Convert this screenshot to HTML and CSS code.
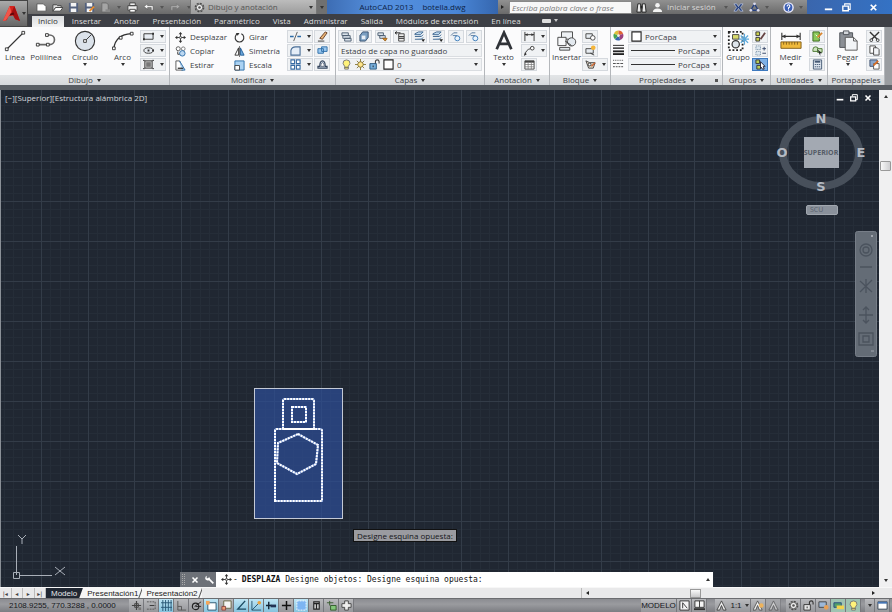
FILE: index.html
```html
<!DOCTYPE html>
<html lang="es">
<head>
<meta charset="utf-8">
<title>AutoCAD 2013 - botella.dwg</title>
<link rel="stylesheet" href="styles.css">
</head>
<body>
<svg class="defs" aria-hidden="true">
  <symbol id="new" viewBox="0 0 12 12"><path d="M1 2h7l3 3v5H1z" fill="#fff" stroke="#555"/></symbol>
  <symbol id="open" viewBox="0 0 12 12"><path d="M1 10V3h4l1 1h4v2H4z" fill="#ddd" stroke="#444"/><path d="M1 10l3-4h8l-3 4z" fill="#fff" stroke="#444"/></symbol>
  <symbol id="save" viewBox="0 0 12 12"><path d="M1 1h10v10H1z" fill="#53617e"/><path d="M3 1h6v4H3zM3 7h6v4H3z" fill="#f4f4f4"/></symbol>
  <symbol id="saveas" viewBox="0 0 12 12"><path d="M1 1h10v10H1z" fill="#53617e"/><path d="M3 1h6v4H3zM3 7h6v4H3z" fill="#f4f4f4"/><path d="M6 10l5-5" stroke="#e98b2a" stroke-width="2"/></symbol>
  <symbol id="cloud" viewBox="0 0 12 12"><path d="M2 1h5l2 2v8H2z" fill="#a5a5a5" stroke="#6a6a6a"/><path d="M6 8h5v3H6z" fill="#888"/></symbol>
  <symbol id="print" viewBox="0 0 12 12"><path d="M3 1h6v3H3zM1 4h10v5H1z" fill="#eee" stroke="#444"/><path d="M3 8h6v3H3z" fill="#fff" stroke="#444"/></symbol>
  <symbol id="undo" viewBox="0 0 12 12"><path d="M5 2L1 5l4 3V6h4v3h2V4H5z" fill="#f5f5f5" stroke="#555" stroke-width=".6"/></symbol>
  <symbol id="redo" viewBox="0 0 12 12"><path d="M7 2l4 3-4 3V6H3v3H1V4h6z" fill="#a9a9a9" stroke="#707070" stroke-width=".6"/></symbol>
  <symbol id="gear" viewBox="0 0 12 12"><circle cx="6" cy="6" r="4.5" fill="none" stroke="#4b4b4b" stroke-width="1.6" stroke-dasharray="2.2 1.3"/><circle cx="6" cy="6" r="3.5" fill="#eee" stroke="#555"/><circle cx="6" cy="6" r="1.4" fill="#555"/></symbol>
  <symbol id="binoc" viewBox="0 0 12 12"><path d="M2 2h3l.5 9H1zM7 2h3l1 9H6.500z" fill="#e8e8e8" stroke="#222"/><path d="M5 4h2v3H5z" fill="#222"/></symbol>
  <symbol id="user" viewBox="0 0 12 12"><circle cx="6" cy="3.500" r="2.500" fill="#f3f3f3"/><path d="M1 11q0-4 5-4t5 4z" fill="#f3f3f3"/></symbol>
  <symbol id="exch" viewBox="0 0 12 12"><path d="M1 2h3l2 3 2-3h3L8 6l3 4H8L6 7l-2 3H1l3-4z" fill="#25407d" stroke="#c8d2ea" stroke-width=".7"/></symbol>
  <symbol id="tri" viewBox="0 0 12 12"><path d="M6 2l4 7H2z" fill="none" stroke="#26407e" stroke-width="1.500"/><circle cx="6" cy="2" r="1.500" fill="#dde"/><circle cx="2" cy="9" r="1.500" fill="#dde"/><circle cx="10" cy="9" r="1.500" fill="#dde"/></symbol>
  <symbol id="help" viewBox="0 0 12 12"><circle cx="6" cy="6" r="5" fill="#3a5eb5" stroke="#eef" stroke-width="1.500"/><path d="M4.500 5q0-2 1.500-2t1.500 1.500q0 1-1.500 1.800V7.500M6 8.300V9.500" fill="none" stroke="#fff" stroke-width="1.200"/></symbol>
  <symbol id="min" viewBox="0 0 12 12"><path d="M2 8h8" stroke="#fff" stroke-width="2"/></symbol>
  <symbol id="rest" viewBox="0 0 12 12"><path d="M4 4V2h6v6H8" fill="none" stroke="currentColor" stroke-width="1.200"/><path d="M2 4.500h6v5H2z" fill="none" stroke="currentColor" stroke-width="1.500"/></symbol>
  <symbol id="x" viewBox="0 0 12 12"><path d="M3 3l6 6M9 3L3 9" stroke="#fff" stroke-width="1.900"/></symbol>

  <symbol id="line" viewBox="0 0 24 24"><path d="M3 21L21 3" stroke="#333" stroke-width="1.200"/><path d="M1.500 19.500h3v3h-3zM19.500 1.500h3v3h-3z" fill="#fff" stroke="#333"/></symbol>
  <symbol id="pline" viewBox="0 0 24 24"><path d="M3 16h13a5 5 0 0 0 0-10.500H13" fill="none" stroke="#666" stroke-width="1.800"/><path d="M1.500 14.500h3v3h-3zM11.500 4h3v3h-3zM12.500 14.500h3v3h-3z" fill="#fff" stroke="#333"/></symbol>
  <symbol id="circ" viewBox="0 0 24 24"><circle cx="12" cy="12" r="10.500" fill="#dbe2ea" stroke="#333" stroke-width="1.200"/><path d="M12 12l7-7" stroke="#333"/><path d="M10.500 10.500h3v3h-3z" fill="#fff" stroke="#333"/></symbol>
  <symbol id="arc" viewBox="0 0 24 24"><path d="M2 20Q4 5 21 4" fill="none" stroke="#333" stroke-width="1.400"/><path d="M.5 18.500h3v3h-3zM8 7h3v3H8zM20 2.500h3v3h-3z" fill="#fff" stroke="#333"/></symbol>
  <symbol id="rect" viewBox="0 0 12 12"><path d="M1 3h10v6H1z" fill="#e8edf3" stroke="#333"/><path d="M0 8h2v2H0zM10 2h2v2h-2z" fill="#333"/></symbol>
  <symbol id="elip" viewBox="0 0 12 12"><ellipse cx="6" cy="6" rx="5" ry="3" fill="#e8edf3" stroke="#333"/><path d="M5 5h2v2H5zM10 5h2v2h-2z" fill="#333"/></symbol>
  <symbol id="hatch" viewBox="0 0 12 12"><path d="M2 2h8v8H2z" fill="#ccc" stroke="#333"/><path d="M3.500 3.500h5v5h-5z" fill="#777"/><path d="M0 1.500h2M10 1.500h2M0 10.500h2M10 10.500h2" stroke="#333"/></symbol>
  <symbol id="move" viewBox="0 0 12 12"><path d="M6 1v10M1 6h10" stroke="#333"/><path d="M6 0l2 2.500H4zM6 12l2-2.500H4zM0 6l2.500-2v4zM12 6L9.500 4v4z" fill="#333"/><path d="M5 5h2v2H5z" fill="#fff" stroke="#333" stroke-width=".6"/></symbol>
  <symbol id="copy" viewBox="0 0 12 12"><circle cx="3.500" cy="3" r="2.200" fill="#fff" stroke="#555"/><circle cx="9" cy="3" r="2" fill="#fff" stroke="#777"/><circle cx="8" cy="8" r="3" fill="#bcd8f2" stroke="#2d6da8"/><path d="M3 6v3h2" fill="none" stroke="#333"/></symbol>
  <symbol id="stretch" viewBox="0 0 12 12"><path d="M1 1h4l4 10H1z" fill="#fff" stroke="#555"/><path d="M5 1l6 10H7" fill="#b4d6f4" stroke="#2d6da8"/><path d="M3 9h6" stroke="#222" stroke-width="1.300"/></symbol>
  <symbol id="rot" viewBox="0 0 12 12"><path d="M4 2a4.700 4.700 0 1 0 4 0" fill="none" stroke="#333" stroke-width="1.200"/><path d="M2 1l4 0-2 3z" fill="#333"/></symbol>
  <symbol id="mirror" viewBox="0 0 12 12"><path d="M5 2v8H1z" fill="#fff" stroke="#333"/><path d="M7 2v8h4z" fill="#6ba8de" stroke="#245d95"/><path d="M6 0v12" stroke="#333" stroke-width=".7"/></symbol>
  <symbol id="scale" viewBox="0 0 12 12"><path d="M1 1h10v10H1z" fill="#aad2f3" stroke="#2d6da8"/><path d="M1 6h5v5H1z" fill="#fff" stroke="#444"/></symbol>
  <symbol id="trim" viewBox="0 0 12 12"><path d="M0 6h4M8 6h4" stroke="#2d6da8" stroke-width="1.400"/><path d="M8 1L4 11" stroke="#555"/></symbol>
  <symbol id="fillet" viewBox="0 0 12 12"><path d="M1 11V6q1-4 5-4h5v9z" fill="#e4edf7" stroke="#4a6e97" stroke-width="1.200"/></symbol>
  <symbol id="array" viewBox="0 0 12 12"><path d="M1 1h4v4H1zM7 1h4v4H7zM1 7h4v4H1zM7 7h4v4H7z" fill="#fff" stroke="#376ba3" stroke-width="1.200"/></symbol>
  <symbol id="erase" viewBox="0 0 12 12"><path d="M3 8l6-7 2 1-5 7z" fill="#eab374" stroke="#663d23"/><path d="M1 11h7" stroke="#333"/></symbol>
  <symbol id="expl" viewBox="0 0 12 12"><path d="M1 4h6v5H1zM5 2h6v5H5z" fill="#9bc8ef" stroke="#2d6da8"/></symbol>
  <symbol id="offset" viewBox="0 0 12 12"><path d="M1 10h10V8H9q0-6-3-6T3 8H1z" fill="#dbe6f2" stroke="#35455c" stroke-width="1.200"/><path d="M4 8q0-4 2-4t2 4z" fill="#fff" stroke="#35455c" stroke-width=".8"/></symbol>
  <symbol id="lay" viewBox="0 0 12 12"><path d="M1 2h7v3H1zM2 5h8v3H2zM4 8h7v3H4z" fill="#dce4ec" stroke="#4c5d70"/></symbol>
  <symbol id="layb" viewBox="0 0 12 12"><path d="M1 5l3-4h6v6l-3 4H1z" fill="#7b9fc1" stroke="#344f6d"/><path d="M3 5h4v4H3z" fill="#e8eef5"/></symbol>
  <symbol id="layo" viewBox="0 0 12 12"><path d="M1 2h6v3H1zM3 5h6v3H3z" fill="#dce4ec" stroke="#4c5d70"/><path d="M6 8h5l-2 3z" fill="#e09326" stroke="#99601d"/></symbol>
  <symbol id="layp" viewBox="0 0 12 12"><path d="M4 3h6v3H4zM4 6h6v2H4zM4 8h6v3H4z" fill="#eee" stroke="#444"/><path d="M0 2h6M0 2l2-1.500M0 2l2 1.500" stroke="#222"/></symbol>
  <symbol id="layd" viewBox="0 0 12 12"><path d="M1 3l4-2h5L7 4H1zM1 6h7l2-2M1 9h7l2-2" fill="#c1dbf0" stroke="#3d668e"/><path d="M8 9h4l-2 3z" fill="#222"/></symbol>
  <symbol id="layf" viewBox="0 0 12 12"><path d="M1 5l3-3h4M3 5h5" fill="none" stroke="#53779c"/><circle cx="8" cy="8" r="2.700" fill="#e9f3fc" stroke="#397ab8"/></symbol>
  <symbol id="bulb" viewBox="0 0 12 12"><path d="M4 8Q1 5 3 2q3-2 6 0 2 3-1 6v3H4z" fill="#fff37a" stroke="#777"/><path d="M4 9h4" stroke="#555"/></symbol>
  <symbol id="sun" viewBox="0 0 12 12"><path d="M6 0v12M0 6h12M2 2l8 8M10 2l-8 8" stroke="#8a7a3a"/><circle cx="6" cy="6" r="3" fill="#ffe58a" stroke="#7e6f35"/></symbol>
  <symbol id="lock" viewBox="0 0 12 12"><path d="M7 6V3q0-2 2-2t2 2v2" fill="none" stroke="#444" stroke-width="1.200"/><path d="M1 5h7v6H1z" fill="#78b0dc" stroke="#29587f"/><path d="M4 7h1v2H4z" fill="#222"/></symbol>
  <symbol id="lockg" viewBox="0 0 12 12"><path d="M7 6V3q0-2 2-2t2 2v2" fill="none" stroke="#333" stroke-width="1.200"/><path d="M1 5h7v6H1z" fill="#e6e6e6" stroke="#333"/><path d="M4 7h1v2H4z" fill="#222"/></symbol>
  <symbol id="sw" viewBox="0 0 12 12"><path d="M1 1h10v10H1z" fill="#fff" stroke="#222" stroke-width="1.200"/></symbol>
  <symbol id="bigA" viewBox="0 0 24 24"><path d="M4 21L12 3l8 18M7 15h10" fill="none" stroke="#303338" stroke-width="3"/></symbol>
  <symbol id="dim" viewBox="0 0 12 12"><path d="M1 1v10M11 1v10M1 4h10" stroke="#333" fill="none"/><path d="M1 4l3-1.500v3zM11 4L8 2.500v3z" fill="#333"/></symbol>
  <symbol id="lead" viewBox="0 0 12 12"><path d="M1 11Q2 5 7 4" fill="none" stroke="#333"/><circle cx="9" cy="3.500" r="2" fill="#fff" stroke="#333"/><path d="M0 12l1-4 2 2z" fill="#333"/></symbol>
  <symbol id="table" viewBox="0 0 12 12"><path d="M1 2h10v9H1z" fill="#fff" stroke="#444"/><path d="M1 3h10" stroke="#444" stroke-width="2"/><path d="M1 6h10M1 8.500h10M4.500 3v8M8 3v8" stroke="#777" stroke-width=".8"/></symbol>
  <symbol id="ins" viewBox="0 0 24 24"><path d="M6 2h12v8H6z" fill="#eef1f4" stroke="#444"/><circle cx="17" cy="13" r="4.500" fill="#e3e9ef" stroke="#444"/><path d="M2 8h9v9H2z" fill="#f7f8fa" stroke="#444"/><path d="M4 19h11v3H4z" fill="#e1e6ea" stroke="#444"/><path d="M10 12l7 5" stroke="#333"/></symbol>
  <symbol id="blk" viewBox="0 0 12 12"><path d="M1 3h7v5H1z" fill="#e7ecf1" stroke="#444"/><circle cx="8.500" cy="7.500" r="2.500" fill="#fff" stroke="#444"/></symbol>
  <symbol id="blks" viewBox="0 0 12 12"><path d="M1 4h8v5H1z" fill="#e7ecf1" stroke="#444"/><circle cx="9" cy="3" r="2.500" fill="#f4b53a"/><path d="M6 9l4 2" stroke="#333"/></symbol>
  <symbol id="tag" viewBox="0 0 12 12"><path d="M1 2l4 2h6L9 10H4z" fill="#e1d5c2" stroke="#444"/><circle cx="5" cy="6" r="1.500" fill="#fff" stroke="#333"/><path d="M7 8l4-4" stroke="#c63" stroke-width="1.500"/></symbol>
  <symbol id="wheel" viewBox="0 0 12 12"><path d="M6 6L1 4A5.500 5.500 0 0 1 6 .5z" fill="#ddc13c"/><path d="M6 6V.5A5.500 5.500 0 0 1 11 4z" fill="#e06435"/><path d="M6 6l5-2a5.500 5.500 0 0 1-3 7z" fill="#9b417e"/><path d="M6 6l2 5a5.500 5.500 0 0 1-6-1z" fill="#3764ae"/><path d="M6 6l-4 4a5.500 5.500 0 0 1-1-6z" fill="#46a452"/><circle cx="6" cy="6" r="1.500" fill="#eee"/></symbol>
  <symbol id="lw" viewBox="0 0 12 12"><path d="M0 1.500h12" stroke="#222"/><path d="M0 4.500h12" stroke="#222" stroke-width="1.500"/><path d="M0 8h12" stroke="#222" stroke-width="2"/><path d="M0 11h12" stroke="#222" stroke-width="2"/></symbol>
  <symbol id="lt" viewBox="0 0 12 12"><path d="M0 2.500h12" stroke="#444" stroke-dasharray="1 1"/><path d="M0 6h12" stroke="#444" stroke-dasharray="3 1"/><path d="M0 9.500h12" stroke="#444" stroke-dasharray="2 1"/></symbol>
  <symbol id="grp" viewBox="0 0 24 24"><path d="M2 2h15v20H2z" fill="#fff" stroke="#222" stroke-width="2" stroke-dasharray="2 2"/><path d="M6 5h7v5H6z" fill="#d9db6d" stroke="#444"/><circle cx="9.500" cy="15.500" r="4" fill="#dfe6ec" stroke="#333" stroke-width="1.300"/><path d="M19 4v12M13 10h11M15 6l8 8M23 6l-8 8" stroke="#5da9da" stroke-width="1.400"/></symbol>
  <symbol id="ug" viewBox="0 0 12 12"><path d="M1 1h4v4H1zM1 7h4v4H1z" fill="#ccd14f" stroke="#333"/><path d="M6 9l5-7" stroke="#644" stroke-width="2"/></symbol>
  <symbol id="ge" viewBox="0 0 12 12"><path d="M1 1h5v4H1zM1 7h5v4H1z" fill="#dde7ef" stroke="#68829a" stroke-dasharray="1 1"/><path d="M8 4h4M10 2v4M8 9h4" stroke="#346"/></symbol>
  <symbol id="gs" viewBox="0 0 12 12"><path d="M1 1h4v4H1zM2 7h4v4H2z" fill="#b8cf58" stroke="#333"/><path d="M6 3l5 5-2 0 1 3-2 0-1-2-1 1z" fill="#fff" stroke="#223"/></symbol>
  <symbol id="meas" viewBox="0 0 24 24"><path d="M2 3v8M22 3v8M2 7h20" stroke="#333" stroke-width="1.200"/><path d="M2 7l4-2v4zM22 7l-4-2v4z" fill="#333"/><path d="M1 13h22v7H1z" fill="#efb93b" stroke="#805d18"/><path d="M4 13v3M7 13v3M10 13v3M13 13v3M16 13v3M19 13v3" stroke="#805d18"/></symbol>
  <symbol id="qs" viewBox="0 0 12 12"><path d="M1 1h7v10H1z" fill="#8cc95b" stroke="#37651f"/><path d="M4 4l4 4" stroke="#fff"/><path d="M6 7l5-5" stroke="#d9852d" stroke-width="2"/></symbol>
  <symbol id="qc" viewBox="0 0 12 12"><path d="M1 5q0-3 3-3t3 3v2H1z" fill="#cfe4c0" stroke="#48752e"/><path d="M6 4h5v4H6z" fill="#cfe4c0" stroke="#48752e"/><path d="M6 5l5 4-2 0 0 3z" fill="#222"/></symbol>
  <symbol id="calc" viewBox="0 0 12 12"><path d="M1.500 1h9v10h-9z" fill="#dce4ee" stroke="#445873"/><path d="M3 3h6" stroke="#445873" stroke-width="2"/><path d="M3 6h6M3 8.500h6" stroke="#445873" stroke-dasharray="1.500 .7"/></symbol>
  <symbol id="paste" viewBox="0 0 24 24"><path d="M3 3h14v16H3z" fill="#8b8f95" stroke="#4b4f55"/><path d="M7 1h6v4H7z" fill="#d3d6da" stroke="#4b4f55"/><path d="M9 8h9l4 4v10H9z" fill="#f2f4f6" stroke="#555"/><path d="M18 8v4h4" fill="none" stroke="#555"/></symbol>
  <symbol id="cut" viewBox="0 0 12 12"><path d="M1 1l8 8M11 1L3 9" stroke="#333" stroke-width="1.500"/><circle cx="2.500" cy="10" r="1.500" fill="none" stroke="#333"/><circle cx="9.500" cy="10" r="1.500" fill="none" stroke="#333"/></symbol>
  <symbol id="dup" viewBox="0 0 12 12"><path d="M1 1h6v8H1z" fill="#fff" stroke="#444"/><path d="M5 3h4l2 2v6H5z" fill="#f2f4f7" stroke="#444"/></symbol>
  <symbol id="mp" viewBox="0 0 12 12"><path d="M1 1h8v7H1z" fill="#8ba7cb" stroke="#3b4f6d"/><path d="M5 5h6v6H5z" fill="#fff" stroke="#555"/><path d="M5 7l5-5" stroke="#d96f26" stroke-width="2"/></symbol>

  <symbol id="s1" viewBox="0 0 12 12"><path d="M6 1v10M1 6h10" fill="none" stroke="#444" stroke-width="1.300"/><path d="M4 4h4v4H4z" fill="none" stroke="#444"/><path d="M8 8h3v3H8z" fill="#777"/></symbol>
  <symbol id="s2" viewBox="0 0 12 12"><path d="M1 2h9v8H1" fill="none" stroke="#555" stroke-dasharray="2 1"/><path d="M4 6h5" stroke="#333"/></symbol>
  <symbol id="s3" viewBox="0 0 12 12"><path d="M2 0v12M5 0v12M8 0v12M11 0v12M0 3h12M0 8h12" stroke="#265573"/></symbol>
  <symbol id="s4" viewBox="0 0 12 12"><path d="M2 1v10h9M2 7h4v4" fill="none" stroke="#555"/></symbol>
  <symbol id="s5" viewBox="0 0 12 12"><circle cx="5" cy="7" r="3.500" fill="none" stroke="#222" stroke-width="1.300"/><path d="M4 7l7-5M5 7h6" stroke="#222"/></symbol>
  <symbol id="s6" viewBox="0 0 12 12"><path d="M2 3h9v8H2z" fill="#fff" stroke="#28536d"/><path d="M0 1h4v4H0z" fill="#f4a659"/></symbol>
  <symbol id="s7" viewBox="0 0 12 12"><path d="M3 1h8v8H3z" fill="#f5f5f5" stroke="#664"/><path d="M1 7h4v4H1z" fill="#ee9b72" stroke="#844"/></symbol>
  <symbol id="s8" viewBox="0 0 12 12"><path d="M10 1L2 10h9" fill="none" stroke="#1c4b63" stroke-width="1.500"/></symbol>
  <symbol id="s9" viewBox="0 0 12 12"><path d="M1 1v10h10M1 11l7-7" fill="none" stroke="#24516a"/><circle cx="9" cy="3" r="2" fill="#e9a13c"/></symbol>
  <symbol id="s10" viewBox="0 0 12 12"><path d="M3 2v8M0 6h6" stroke="#123" stroke-width="1.500"/><path d="M5 5h6v3H5z" fill="#235"/></symbol>
  <symbol id="s11" viewBox="0 0 12 12"><path d="M6 1v10M1 6h10" stroke="#111" stroke-width="1.600"/></symbol>
  <symbol id="s12" viewBox="0 0 12 12"><path d="M1 1h10v10H1z" fill="#7db5f2" stroke="#f4faff" stroke-dasharray="2 1"/></symbol>
  <symbol id="s13" viewBox="0 0 12 12"><path d="M3 2h6v8H3zM3 4h6M6 4v6" fill="#ccc" stroke="#222" stroke-width="1.200"/></symbol>
  <symbol id="s14" viewBox="0 0 12 12"><path d="M1 3h7M4 1v5" stroke="#355a2c"/><path d="M5 6h6v5H5z" fill="#83c779" stroke="#315a2b"/></symbol>
  <symbol id="s15" viewBox="0 0 12 12"><path d="M4 1h4v3h3v4H8v3H4V8H1V4h3z" fill="#eee" stroke="#444"/></symbol>
  <symbol id="m1" viewBox="0 0 12 12"><path d="M1 1h10v10H1z" fill="#f4f4f4" stroke="#333"/><path d="M4 3v6M4 3l5 6" stroke="#333"/></symbol>
  <symbol id="m2" viewBox="0 0 12 12"><path d="M1 1h10v7H1zM6 1v7" fill="#f4f4f4" stroke="#333"/><path d="M0 10h12" stroke="#333" stroke-width="2"/></symbol>
  <symbol id="ann" viewBox="0 0 12 12"><path d="M6 1l5 10H8L6 6l-2 5H1z" fill="#eee" stroke="#444"/></symbol>
  <symbol id="anns" viewBox="0 0 12 12"><path d="M5 1l5 10H7L5 6l-2 5H0z" fill="#eee" stroke="#555"/><circle cx="9" cy="6" r="2.500" fill="#efb35a"/></symbol>
  <symbol id="hw" viewBox="0 0 12 12"><path d="M1 2h8v6H1z" fill="#9cb8d9" stroke="#444"/><circle cx="9" cy="8" r="2.500" fill="#e8a057"/></symbol>
  <symbol id="iso" viewBox="0 0 12 12"><path d="M1 3h8v5H1z" fill="#4f9e6d" stroke="#274a80"/><path d="M4 6h8v4H4z" fill="#f2d34e"/></symbol>
  <symbol id="clean" viewBox="0 0 12 12"><path d="M1 2h10v8H1z" fill="#fff" stroke="#345"/><path d="M1 3h10" stroke="#4676b5" stroke-width="2"/></symbol>
  <symbol id="wrench" viewBox="0 0 12 12"><path d="M4 4l6 6" stroke="#fff" stroke-width="2"/><path d="M2 1a3 3 0 1 0 4 4L5 2 4 4 2 4z" fill="#fff"/></symbol>
</svg>

<header class="top">
  <button class="app" aria-label="Menú de la aplicación">
    <svg viewBox="0 0 20 20"><path d="M1 18L8 2h5l6 16-5-2-2-4-5 1-2 4z" fill="#d5241d"/><path d="M8 2l2 7-6 8-3 1z" fill="#f0564a"/><path d="M13 2l6 16-5-2-4-7z" fill="#a40f10"/><path d="M9 10l3-1 1 2-5 1z" fill="#5e080a"/></svg><i class="dn"></i>
  </button>
  <div class="titlebar">
    <div class="quick">
      <button aria-label="Nuevo"><svg class="ic"><use href="#new"/></svg></button><button aria-label="Abrir"><svg class="ic"><use href="#open"/></svg></button><button aria-label="Guardar"><svg class="ic"><use href="#save"/></svg></button><button aria-label="Guardar como"><svg class="ic"><use href="#saveas"/></svg></button><button aria-label="Nube"><svg class="ic"><use href="#cloud"/></svg></button><i class="dn dim"></i><button aria-label="Imprimir"><svg class="ic"><use href="#print"/></svg></button><button aria-label="Deshacer"><svg class="ic"><use href="#undo"/></svg></button><i class="dn dim"></i><button aria-label="Rehacer"><svg class="ic"><use href="#redo"/></svg></button><i class="dn dim"></i>
    </div>
    <div class="workspace"><svg class="ic"><use href="#gear"/></svg><select aria-label="Espacio de trabajo"><option>Dibujo y anotación</option></select><i class="dn"></i></div>
    <button class="more" aria-label="Personalizar"><i class="dn"></i></button>
    <div class="doc"><span>AutoCAD 2013</span><span>botella.dwg</span></div>
    <div class="searchzone"><i class="rt"></i><input type="text" aria-label="Buscar" placeholder="Escriba palabra clave o frase"></div>
    <div class="account">
      <button aria-label="Buscar ahora"><svg class="ic"><use href="#binoc"/></svg></button><button class="login"><svg class="ic"><use href="#user"/></svg>Iniciar sesión</button><i class="dn dim"></i><button aria-label="Exchange"><svg class="ic"><use href="#exch"/></svg></button><button aria-label="Conectado"><svg class="ic"><use href="#tri"/></svg></button><i class="dn dim"></i><button class="helpb" aria-label="Ayuda"><svg class="ic"><use href="#help"/></svg></button><i class="dn dim"></i>
    </div>
    <div class="winctl"><button aria-label="Minimizar"><svg class="ic"><use href="#min"/></svg></button><button aria-label="Restaurar"><svg class="ic"><use href="#rest"/></svg></button><button aria-label="Cerrar"><svg class="ic"><use href="#x"/></svg></button></div>
  </div>
  <nav class="tabs">
    <a href="#" class="on">Inicio</a><a href="#">Insertar</a><a href="#">Anotar</a><a href="#">Presentación</a><a href="#">Paramétrico</a><a href="#">Vista</a><a href="#">Administrar</a><a href="#">Salida</a><a href="#">Módulos de extensión</a><a href="#">En línea</a><button aria-label="Minimizar cinta"><b class="pill"></b><i class="dn"></i></button>
  </nav>
</header>

<main class="ribbon">
  <section class="panel">
    <div class="body draw">
      <button class="big"><svg><use href="#line"/></svg>Línea</button>
      <button class="big"><svg><use href="#pline"/></svg>Polilínea</button>
      <button class="big"><svg><use href="#circ"/></svg>Círculo<i class="dn"></i></button>
      <button class="big"><svg><use href="#arc"/></svg>Arco<i class="dn"></i></button>
      <div class="stack">
        <button class="split" aria-label="Rectángulo"><svg class="ic"><use href="#rect"/></svg><i class="dn"></i></button>
        <button class="split" aria-label="Elipse"><svg class="ic"><use href="#elip"/></svg><i class="dn"></i></button>
        <button class="split" aria-label="Sombreado"><svg class="ic"><use href="#hatch"/></svg><i class="dn"></i></button>
      </div>
    </div>
    <h2>Dibujo <i class="dn"></i></h2>
  </section>
  <section class="panel">
    <div class="body modify">
      <div class="stack">
        <button class="lab"><svg class="ic"><use href="#move"/></svg>Desplazar</button>
        <button class="lab"><svg class="ic"><use href="#copy"/></svg>Copiar</button>
        <button class="lab"><svg class="ic"><use href="#stretch"/></svg>Estirar</button>
      </div>
      <div class="stack">
        <button class="lab"><svg class="ic"><use href="#rot"/></svg>Girar</button>
        <button class="lab"><svg class="ic"><use href="#mirror"/></svg>Simetría</button>
        <button class="lab"><svg class="ic"><use href="#scale"/></svg>Escala</button>
      </div>
      <div class="stack">
        <button class="split" aria-label="Recortar"><svg class="ic"><use href="#trim"/></svg><i class="dn"></i></button>
        <button class="split" aria-label="Empalme"><svg class="ic"><use href="#fillet"/></svg><i class="dn"></i></button>
        <button class="split" aria-label="Matriz"><svg class="ic"><use href="#array"/></svg><i class="dn"></i></button>
      </div>
      <div class="stack">
        <button class="sm" aria-label="Borrar"><svg class="ic"><use href="#erase"/></svg></button>
        <button class="sm" aria-label="Descomponer"><svg class="ic"><use href="#expl"/></svg></button>
        <button class="sm" aria-label="Desfase"><svg class="ic"><use href="#offset"/></svg></button>
      </div>
    </div>
    <h2>Modificar <i class="dn"></i></h2>
  </section>
  <section class="panel">
    <div class="body layers">
      <div class="row">
        <button class="sm" aria-label="Propiedades de capas"><svg class="ic"><use href="#lay"/></svg></button><button class="sm" aria-label="Definir actual"><svg class="ic"><use href="#layb"/></svg></button><button class="sm" aria-label="Igualar"><svg class="ic"><use href="#layo"/></svg></button><button class="sm" aria-label="Anterior"><svg class="ic"><use href="#layp"/></svg></button><button class="sm" aria-label="Aislar"><svg class="ic"><use href="#layd"/></svg></button><button class="sm" aria-label="Desaislar"><svg class="ic"><use href="#layd"/></svg></button><button class="sm" aria-label="Inutilizar"><svg class="ic"><use href="#layf"/></svg></button><button class="sm" aria-label="Desactivar"><svg class="ic"><use href="#layf"/></svg></button>
      </div>
      <div class="pick"><select aria-label="Estado de capa"><option>Estado de capa no guardado</option></select><i class="dn"></i></div>
      <div class="pick"><svg class="ic"><use href="#bulb"/></svg><svg class="ic"><use href="#sun"/></svg><svg class="ic"><use href="#lock"/></svg><svg class="ic"><use href="#sw"/></svg><select aria-label="Capa"><option>0</option></select><i class="dn"></i></div>
    </div>
    <h2>Capas <i class="dn"></i></h2>
  </section>
  <section class="panel">
    <div class="body two">
      <button class="big"><svg><use href="#bigA"/></svg>Texto<i class="dn"></i></button>
      <div class="stack">
        <button class="split" aria-label="Cota"><svg class="ic"><use href="#dim"/></svg><i class="dn"></i></button>
        <button class="split" aria-label="Directriz"><svg class="ic"><use href="#lead"/></svg><i class="dn"></i></button>
        <button class="sm" aria-label="Tabla"><svg class="ic"><use href="#table"/></svg></button>
      </div>
    </div>
    <h2>Anotación <i class="dn"></i></h2>
  </section>
  <section class="panel">
    <div class="body two">
      <button class="big"><svg><use href="#ins"/></svg>Insertar</button>
      <div class="stack">
        <button class="sm" aria-label="Crear bloque"><svg class="ic"><use href="#blk"/></svg></button>
        <button class="sm" aria-label="Editar bloque"><svg class="ic"><use href="#blks"/></svg></button>
        <button class="split" aria-label="Atributos"><svg class="ic"><use href="#tag"/></svg><i class="dn"></i></button>
      </div>
    </div>
    <h2>Bloque <i class="dn"></i></h2>
  </section>
  <section class="panel">
    <div class="body props">
      <svg class="ic"><use href="#wheel"/></svg><div class="pick"><svg class="ic"><use href="#sw"/></svg><select aria-label="Color"><option>PorCapa</option></select><i class="dn"></i></div>
      <svg class="ic"><use href="#lw"/></svg><div class="pick"><b class="rule"></b><select class="tail" aria-label="Grosor de línea"><option>PorCapa</option></select><i class="dn"></i></div>
      <svg class="ic"><use href="#lt"/></svg><div class="pick"><b class="rule"></b><select class="tail" aria-label="Tipo de línea"><option>PorCapa</option></select><i class="dn"></i></div>
    </div>
    <h2>Propiedades <i class="dn"></i></h2><span class="launch"></span>
  </section>
  <section class="panel">
    <div class="body two">
      <button class="big"><svg><use href="#grp"/></svg>Grupo</button>
      <div class="stack">
        <button class="sm" aria-label="Desagrupar"><svg class="ic"><use href="#ug"/></svg></button>
        <button class="sm" aria-label="Editar grupo"><svg class="ic"><use href="#ge"/></svg></button>
        <button class="sm sel" aria-label="Selección de grupo"><svg class="ic"><use href="#gs"/></svg></button>
      </div>
    </div>
    <h2>Grupos <i class="dn"></i></h2>
  </section>
  <section class="panel">
    <div class="body two">
      <button class="big"><svg><use href="#meas"/></svg>Medir<i class="dn"></i></button>
      <div class="stack">
        <button class="sm" aria-label="Selección rápida"><svg class="ic"><use href="#qs"/></svg></button>
        <button class="sm" aria-label="Seleccionar todo"><svg class="ic"><use href="#qc"/></svg></button>
        <button class="sm" aria-label="Calculadora"><svg class="ic"><use href="#calc"/></svg></button>
      </div>
    </div>
    <h2>Utilidades <i class="dn"></i></h2>
  </section>
  <section class="panel">
    <div class="body two">
      <button class="big"><svg><use href="#paste"/></svg>Pegar<i class="dn"></i></button>
      <div class="stack">
        <button class="sm" aria-label="Cortar"><svg class="ic"><use href="#cut"/></svg></button>
        <button class="sm" aria-label="Copiar al portapapeles"><svg class="ic"><use href="#dup"/></svg></button>
        <button class="sm" aria-label="Igualar propiedades"><svg class="ic"><use href="#mp"/></svg></button>
      </div>
    </div>
    <h2>Portapapeles</h2>
  </section>
</main>

<div class="work">
  <div class="canvas">
    <svg class="grid" aria-hidden="true">
      <defs>
        <pattern id="minor" width="28" height="8" x="12" y="7" patternUnits="userSpaceOnUse"><path d="M0 .5h28M.5 0v8M9.500 0v8M19.500 0v8" stroke="#252d38" stroke-width="1"/></pattern>
        <pattern id="major" width="140" height="40" x="40" y="31" patternUnits="userSpaceOnUse"><path d="M0 .5h140M.5 0v40M47.500 0v40M93.500 0v40" stroke="#333c48" stroke-width="1"/></pattern>
      </defs>
      <rect width="100%" height="100%" fill="url(#minor)"/><rect width="100%" height="100%" fill="url(#major)"/>
    </svg>
    <p class="viewlabel">[−][Superior][Estructura alámbrica 2D]</p>
    <svg class="bottle" viewBox="0 0 89 131"><rect x=".5" y=".5" width="88" height="130" fill="#2d4f98" fill-opacity=".7" stroke="#c3c9d6"/><g fill="none" stroke="#7f9ad4" stroke-width="2"><path id="shape" d="M29 41V13q0-2 2-2h27q2 0 2 2v28zM38 19h14v15H38zM21 113V43q0-2 2-2h43q2 0 2 2v70zM44 46l20 11-2 19-19 10-20-11 1-20z"/></g><use href="#shape" fill="none" stroke="#fff" stroke-width="2" stroke-dasharray="2 1"/></svg>
    <span class="tip">Designe esquina opuesta:</span>
    <svg class="ucs" viewBox="0 0 56 48"><g fill="none" stroke="#a9afb8"><path d="M5.500 13v29M8 42.500h33M2.500 39.500h6v6h-6z"/><path d="M7 2l4 4 4-4M11 6v5M44 34l10 8M54 34l-10 8"/></g></svg>
    <div class="docctl"><button aria-label="Minimizar vista"><svg class="ic"><use href="#min"/></svg></button><button aria-label="Restaurar vista"><svg class="ic"><use href="#rest"/></svg></button><button aria-label="Cerrar vista"><svg class="ic"><use href="#x"/></svg></button></div>
    <svg class="cube" viewBox="0 0 92 84"><ellipse cx="45" cy="42" rx="38" ry="33" fill="none" stroke="#48505b" stroke-width="8"/><rect x="28" y="26" width="35" height="31" fill="#a3a9b2"/><g class="pts"><text x="45" y="12">N</text><text x="45" y="80">S</text><text x="6" y="46">O</text><text x="85" y="46">E</text></g><text class="face" x="45" y="44">SUPERIOR</text></svg>
    <button class="scu">SCU</button>
    <svg class="navbar" viewBox="0 0 22 126"><rect x=".5" y=".5" width="21" height="125" rx="2" fill="#646c76" stroke="#777e88"/><g fill="none" stroke="#4b535e" stroke-width="1.300"><circle cx="11" cy="19" r="6"/><circle cx="11" cy="19" r="3"/><path d="M5 36h12M5 61l12-12M5 50l12 11M11 48v14M11 76v16M4 84h14M8 79l3-3 3 3M8 89l3 3 3-3M4 102h14v12H4zM8 105h6v6H8z"/></g><path d="M16 4l2 2M18 4l-2 2M16 120h3" stroke="#a0a5ad"/></svg>
    <div class="cmd">
      <div class="grip"><i class="dots"></i><button aria-label="Cerrar línea de comandos"><svg class="ic"><use href="#x"/></svg></button><button aria-label="Personalizar comandos"><svg class="ic"><use href="#wrench"/></svg></button></div>
      <svg class="ic"><use href="#move"/></svg><span class="dash">-</span><p><b>DESPLAZA</b> Designe objetos: Designe esquina opuesta:</p><i class="up"></i>
    </div>
  </div>
  <div class="vscroll"><i class="up"></i><b></b><i class="dn"></i></div>
</div>

<div class="sheets">
  <div class="pager"><button aria-label="Primera">|◂</button><button aria-label="Anterior">◂</button><button aria-label="Siguiente">▸</button><button aria-label="Última">▸|</button></div>
  <a href="#" class="on">Modelo</a><a href="#">Presentación1</a><a href="#">Presentación2</a>
  <div class="hscroll"><i class="lf"></i><b></b><i class="rt"></i></div>
</div>

<footer class="status">
  <span class="coords">2108.9255, 770.3288 , 0.0000</span>
  <div class="toggles">
    <button aria-label="Inferir"><svg class="ic"><use href="#s1"/></svg></button><button aria-label="Forzar cursor"><svg class="ic"><use href="#s2"/></svg></button><button class="act" aria-label="Rejilla"><svg class="ic"><use href="#s3"/></svg></button><button aria-label="Orto"><svg class="ic"><use href="#s4"/></svg></button><button aria-label="Polar"><svg class="ic"><use href="#s5"/></svg></button><button class="act" aria-label="Refent"><svg class="ic"><use href="#s6"/></svg></button><button aria-label="Refent 3D"><svg class="ic"><use href="#s7"/></svg></button><button class="act" aria-label="Rastreo"><svg class="ic"><use href="#s8"/></svg></button><button class="act" aria-label="SCP dinámico"><svg class="ic"><use href="#s9"/></svg></button><button class="act" aria-label="Entrada dinámica"><svg class="ic"><use href="#s10"/></svg></button><button aria-label="Grosor"><svg class="ic"><use href="#s11"/></svg></button><button class="act" aria-label="Transparencia"><svg class="ic"><use href="#s12"/></svg></button><button aria-label="Propiedades rápidas"><svg class="ic"><use href="#s13"/></svg></button><button aria-label="Selección cíclica"><svg class="ic"><use href="#s14"/></svg></button><button aria-label="Supervisor"><svg class="ic"><use href="#s15"/></svg></button>
  </div>
  <div class="right">
    <button class="txt">MODELO</button><button aria-label="Presentación"><svg class="ic"><use href="#m1"/></svg></button><button aria-label="Vista rápida"><svg class="ic"><use href="#m2"/></svg></button>
    <button class="txt ratio"><svg class="ic"><use href="#ann"/></svg>1:1<i class="dn"></i></button><button aria-label="Visibilidad"><svg class="ic"><use href="#anns"/></svg></button><button class="off" aria-label="Escalas"><svg class="ic"><use href="#ann"/></svg></button>
    <button class="gap" aria-label="Espacio de trabajo"><svg class="ic"><use href="#gear"/></svg></button><button aria-label="Bloquear"><svg class="ic"><use href="#lockg"/></svg></button><button aria-label="Hardware"><svg class="ic"><use href="#hw"/></svg></button><button class="lit" aria-label="Aislar"><svg class="ic"><use href="#iso"/></svg></button><button class="lit" aria-label="Objetos"><svg class="ic"><use href="#bulb"/></svg></button><button class="opt" aria-label="Opciones"><i class="dn"></i></button><button aria-label="Limpiar pantalla"><svg class="ic"><use href="#clean"/></svg></button>
  </div>
</footer>
</body>
</html>
```
FILE: styles.css
```css
* { box-sizing: border-box; }
html, body { margin: 0; height: 100%; }
body {
  display: flex; flex-direction: column; overflow: hidden;
  font: 8px/10px "Open Sans", "Noto Sans", sans-serif;
  color: #3c3f45; background: #212833;
}
.defs { position: absolute; width: 0; height: 0; }
button, select, input { font: inherit; color: inherit; border: 0; padding: 0; margin: 0; background: none; }
button { display: flex; align-items: center; justify-content: center; white-space: nowrap; }
select { appearance: none; outline: 0; }
a { color: inherit; text-decoration: none; }
h2, p { margin: 0; font: inherit; }
.ic { display: block; width: 11px; height: 11px; flex: none; }
.dn, .up, .rt, .lf { display: inline-block; flex: none; width: 0; height: 0; border: 2px solid transparent; }
.dn { border-top: 3px solid #333; border-bottom: 0; }
.up { border-bottom: 3px solid #333; border-top: 0; }
.rt { border-left: 3px solid #222; border-right: 0; }
.lf { border-right: 3px solid #222; border-left: 0; }
.dim { border-top-color: #555; }

.top { display: grid; grid-template-columns: 28px 1fr; grid-template-rows: 14px 13px; background: #3d3f45; }
.app { grid-row: 1 / 3; background: linear-gradient(#aaa, #666); border: 1px solid #444; border-left: 0; gap: 1px; }
.app svg { width: 19px; height: 21px; }
.titlebar {
  display: grid; grid-template-columns: 162fr 127fr 10fr 171fr 134fr 175fr 85fr; grid-template-rows: 14px;
  background: linear-gradient(#919191, #6a6a6a);
}
.titlebar > div { display: flex; align-items: center; min-width: 0; }
.quick { padding-left: 8px; gap: 5px; }
.quick .dn { margin: 0 1px; }
.workspace { background: linear-gradient(#bcbcbc, #9c9c9c); border: 1px solid #777; border-width: 0 1px; padding: 0 3px; gap: 3px; color: #555; }
.workspace select { flex: 1; min-width: 0; }
.more { background: #707070; }
.doc { justify-content: center; gap: 9px; color: #0d2346; background: linear-gradient(90deg, #3d6db4, #5590de 30%, #4a87d8 75%, #3566ae); }
.searchzone { gap: 5px; padding-left: 3px; }
.searchzone input { flex: 1; min-width: 0; height: 13px; background: #f7f7f7; padding: 0 2px; border: 1px solid #888; }
.searchzone input::placeholder { color: #777; font-style: italic; opacity: 1; }
.account { padding-left: 4px; gap: 5px; color: #d6d6d6; }
.login { gap: 4px; }
.account .login + .dn { margin-left: 3px; }
.helpb { margin-left: 9px; }
.winctl { justify-content: flex-end; gap: 7px; padding-right: 13px; background: linear-gradient(90deg, #3a66ad, #3472c4); color: #fff; }
.winctl button:last-child { margin-left: 9px; }
.tabs { display: flex; align-items: stretch; padding-left: 4px; color: #dcdcdc; }
.tabs a { padding: 1px 7px 1px 6px; line-height: 11px; }
.tabs .on { background: linear-gradient(#d9dbdd, #f4f5f6); color: #333; margin-top: 2px; padding: 0 6px; margin-right: 2px; line-height: 10px; }
.tabs button { margin-left: 14px; gap: 3px; }
.tabs .dn { border-top-color: #ccc; }
.pill { width: 9px; height: 4px; background: #ddd; border-radius: 1px; }

.ribbon {
  display: grid; grid-template-columns: 170fr 166fr 149fr 65fr 61fr 112fr 48fr 57fr 57fr;
  padding-right: 7px; background: #9a9da1; border-bottom: 5px solid #595e64;
}
.panel { position: relative; display: flex; flex-direction: column; min-width: 0; background: #fbfbfc; border-right: 1px solid #b4b7bb; }
.panel h2 { display: flex; align-items: center; justify-content: center; gap: 4px; height: 10px; line-height: 10px; background: linear-gradient(#e3e5e7, #d5d8db); white-space: nowrap; }
.body { height: 48px; padding: 3px 2px 2px; }
.big { flex-direction: column; justify-content: flex-start; line-height: 10px; }
.big svg { width: 22px; height: 22px; display: block; }
.big .dn { margin-top: 1px; }
.stack { display: grid; grid-template-rows: repeat(3, 14px); justify-items: start; }
.split, .sm { height: 13px; background: #f0f2f4; border: 1px solid #d5d9de; }
.split { width: 26px; gap: 6px; }
.sm { width: 16px; }
.sel { background: #7fb1e6; border-color: #3d79be; }
.lab { gap: 4px; }
.draw { display: grid; grid-template-columns: 28px 34px 44px 31px 1fr; padding-left: 1px; }
.draw .stack { padding-left: 2px; }
.modify { display: grid; grid-template-columns: 59px 53px 27px 1fr; padding-left: 5px; }
.layers { display: grid; grid-template-rows: repeat(3, 14px); }
.row { display: flex; justify-content: space-between; }
.pick { display: flex; align-items: center; gap: 3px; height: 13px; min-width: 0; padding: 0 3px 0 2px; background: #f0f2f4; border: 1px solid #dadde1; }
.pick select { flex: 1; min-width: 0; }
.pick .tail { flex: none; }
.pick .rule { flex: 1; height: 1px; background: #333; }
.two { display: grid; grid-template-columns: 1fr auto; column-gap: 1px; }
.props { display: grid; grid-template-columns: 12px 1fr; grid-template-rows: repeat(3, 14px); column-gap: 3px; padding-right: 1px; }
.launch { position: absolute; right: 4px; bottom: 3px; width: 3px; height: 3px; background: #555; }

.work { flex: 1; min-height: 0; display: flex; }
.canvas { position: relative; flex: 1; overflow: hidden; background: #202732; border-left: 1px solid #8a9097; }
.grid { position: absolute; inset: 0; width: 100%; height: 100%; }
.viewlabel { position: absolute; left: 4px; top: 3px; color: #d4d7dc; }
.bottle { position: absolute; left: 253px; top: 298px; width: 89px; height: 131px; }
.tip { position: absolute; left: 352px; top: 439px; padding: 0 3px; line-height: 11px; border: 1px solid #111; background: #9a9ba0; color: #15161a; white-space: nowrap; }
.ucs { position: absolute; left: 10px; bottom: 6px; width: 56px; height: 48px; }
.docctl { position: absolute; right: 6px; top: 3px; display: flex; gap: 4px; color: #fff; }
.docctl .ic { width: 10px; height: 10px; }
.cube { position: absolute; right: 11px; top: 21px; width: 92px; height: 84px; }
.pts { font: 700 13px "DejaVu Sans", sans-serif; fill: #b4bac3; text-anchor: middle; }
.face { font-size: 7px; font-weight: 700; fill: #555c67; text-anchor: middle; }
.scu { position: absolute; right: 41px; top: 115px; width: 32px; height: 10px; padding-left: 3px; justify-content: flex-start; font-size: 7px; background: #8a919b; border: 1px solid #a1a7af; border-radius: 2px; color: #59616d; }
.navbar { position: absolute; right: 2px; top: 141px; width: 22px; height: 126px; }
.cmd { position: absolute; left: 179px; right: 166px; bottom: 0; height: 15px; display: flex; align-items: center; background: #fff; color: #111; font-family: "DejaVu Sans Mono", monospace; padding-right: 3px; }
.cmd p { flex: 1; white-space: nowrap; }
.dash { margin: 0 4px 0 1px; }
.grip { display: flex; align-items: center; gap: 5px; align-self: stretch; width: 36px; margin-right: 5px; padding-left: 2px; background: #6d7178; }
.grip .ic { width: 10px; height: 10px; }
.dots { width: 3px; height: 11px; border: 1px dotted #aaa; border-width: 0 1px; }
.vscroll { width: 13px; display: flex; flex-direction: column; align-items: center; padding: 5px 0; background: #f0f0f1; }
.vscroll b { width: 11px; height: 10px; margin: 63px 0 auto; background: linear-gradient(90deg, #f8f8f8, #cfcfd1); border: 1px solid #999; border-radius: 1px; }

.sheets { display: flex; align-items: stretch; height: 11px; color: #222; background: #e9e9ea; line-height: 11px; border-top: 1px solid #f7f7f7; font-family: "Liberation Sans", sans-serif; }
.pager { display: flex; width: 46px; }
.pager button { flex: 1; font: 6px/9px "DejaVu Sans", sans-serif; border-right: 1px solid #bbb; color: #444; }
.sheets a { padding: 0 4px; background: linear-gradient(110deg, #f6f6f6 calc(100% - 4px), #555 calc(100% - 3px), #f6f6f6 calc(100% - 2px)); }
.sheets .on { padding: 0 6px 0 5px; background: linear-gradient(110deg, #202732 calc(100% - 4px), #f6f6f6 calc(100% - 3px)); color: #e4e6ea; }
.hscroll { flex: none; width: 33%; display: flex; align-items: center; margin: 0 17px 0 auto; border-left: 1px solid #bbb; padding-left: 4px; }
.hscroll b { width: 11px; height: 9px; margin: 0 auto 0 35%; background: linear-gradient(#fafafa, #c9c9cb); border: 1px solid #999; }

.status { display: flex; align-items: center; height: 14px; color: #16181c; background: linear-gradient(#8b8c91, #9a9b9f 40%, #7c7d82); border-top: 1px solid #6b6c70; font-family: "Liberation Sans", sans-serif; }
.coords { width: 129px; padding-left: 9px; white-space: nowrap; }
.toggles, .right { display: flex; height: 13px; }
.toggles button, .right button { width: 15px; height: 13px; background: linear-gradient(#b9babd, #96979b); border-right: 1px solid #77787d; }
.toggles .act { background: linear-gradient(#bfe6f5, #86c3de); }
.right { margin-left: auto; padding-right: 2px; }
.right .txt { width: 36px; }
.right .ratio { width: 36px; gap: 3px; margin-left: 8px; }
.right .off { opacity: .6; }
.right .gap { margin-left: 5px; }
.right .lit { background: #9fc3b2; }
.right .opt { margin-left: 4px; width: 10px; }
```
